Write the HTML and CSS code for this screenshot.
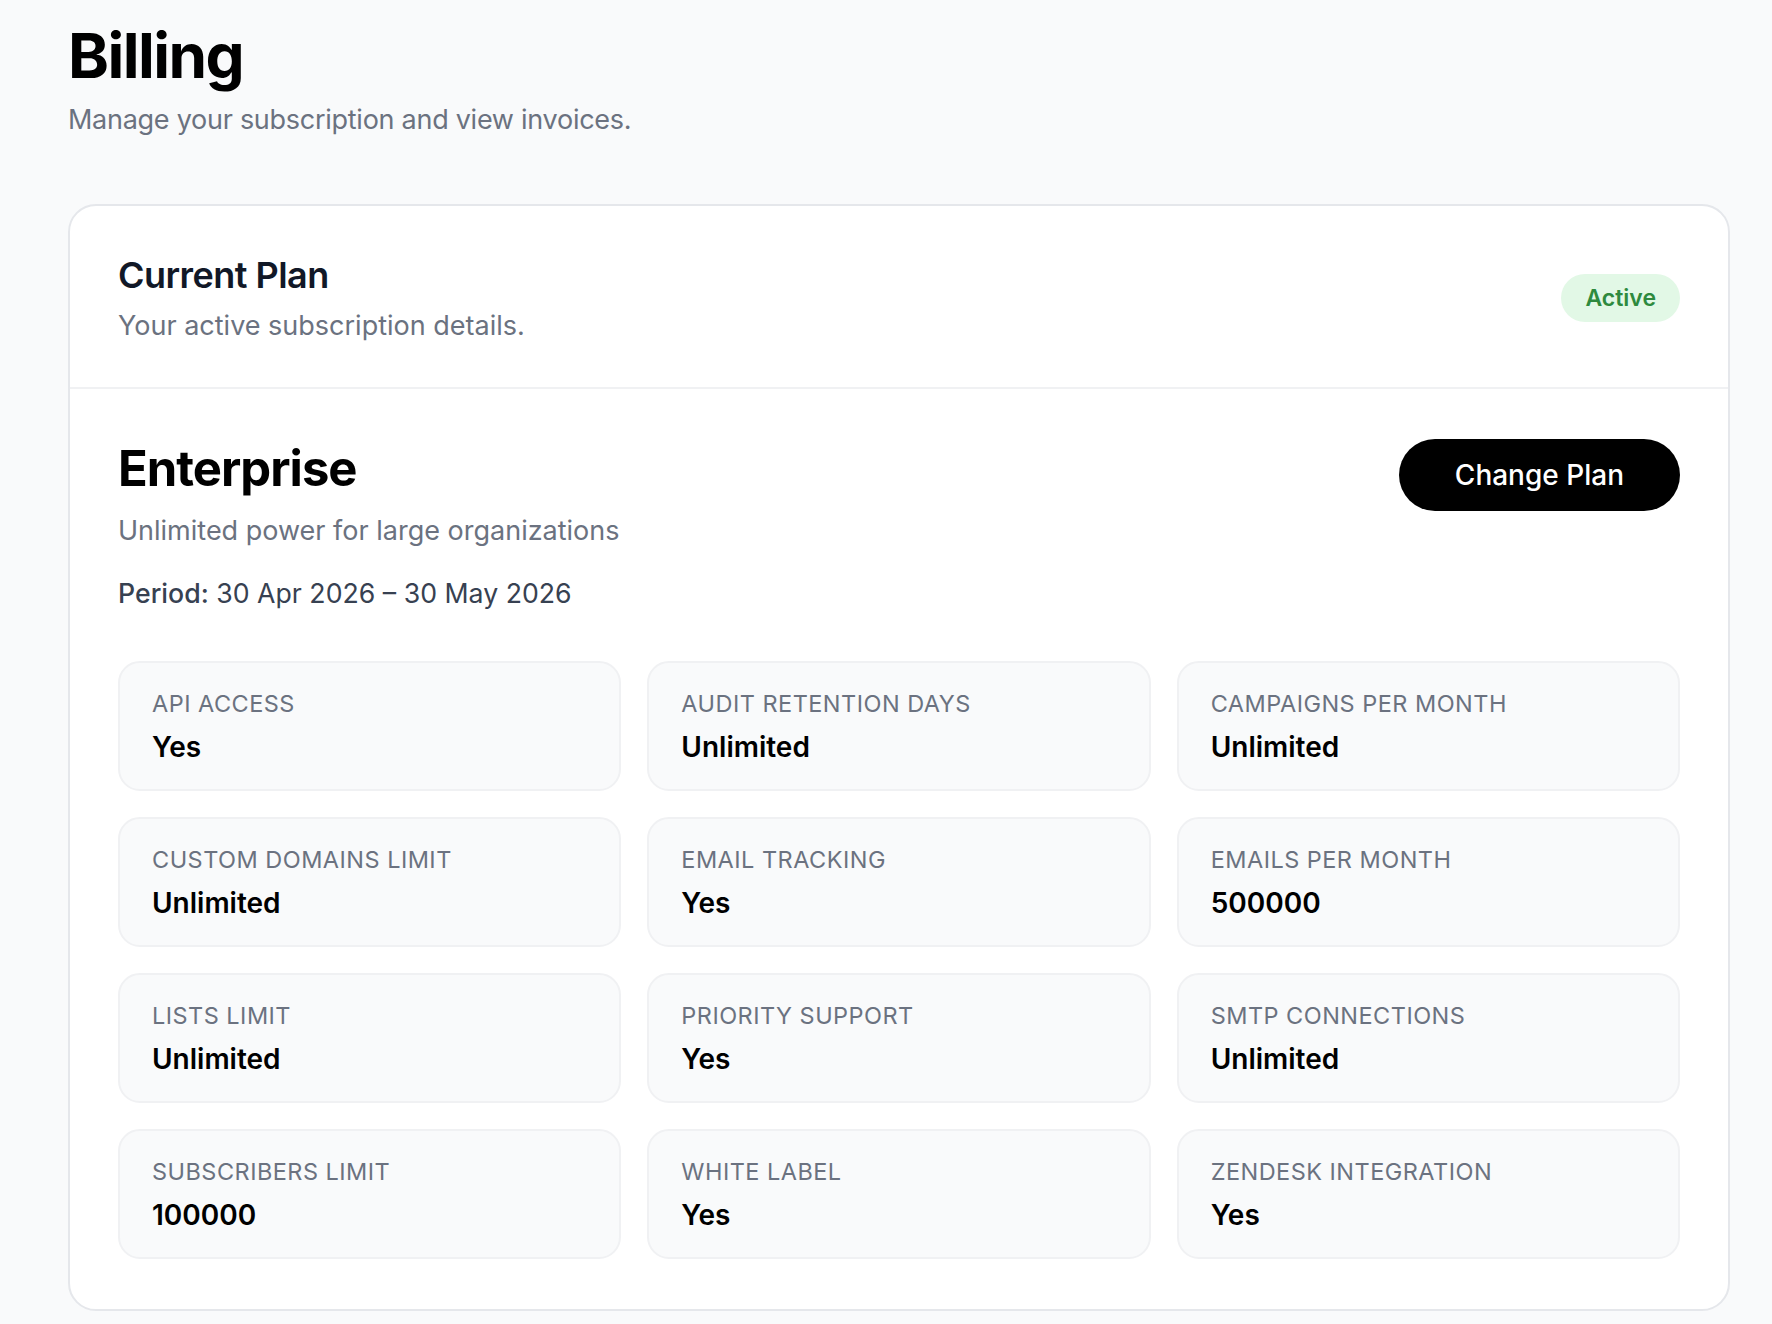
FILE: index.html
```html
<!DOCTYPE html>
<html lang="en">
<head>
    <meta charset="UTF-8">
    <meta name="viewport" content="width=device-width, initial-scale=1.0">
    <title>Billing</title>
    <link rel="stylesheet" href="styles.css">
</head>
<body>
    <div class="page">
        <header class="page-head">
            <h1>Billing</h1>
            <p class="page-sub">Manage your subscription and view invoices.</p>
        </header>

        <section class="card">
            <div class="card-head">
                <div>
                    <h2>Current Plan</h2>
                    <p class="card-sub">Your active subscription details.</p>
                </div>
                <span class="badge">Active</span>
            </div>

            <div class="card-body">
                <div class="plan-row">
                    <div>
                        <h3 class="plan-name">Enterprise</h3>
                        <p class="plan-desc">Unlimited power for large organizations</p>
                        <p class="plan-period"><strong>Period:</strong> 30 Apr 2026 – 30 May 2026</p>
                    </div>
                    <button class="btn-dark">Change Plan</button>
                </div>

                <div class="features">
                    <div class="feature"><div class="f-label">API Access</div><div class="f-value">Yes</div></div>
                    <div class="feature"><div class="f-label">Audit Retention Days</div><div class="f-value">Unlimited</div></div>
                    <div class="feature"><div class="f-label">Campaigns Per Month</div><div class="f-value">Unlimited</div></div>
                    <div class="feature"><div class="f-label">Custom Domains Limit</div><div class="f-value">Unlimited</div></div>
                    <div class="feature"><div class="f-label">Email Tracking</div><div class="f-value">Yes</div></div>
                    <div class="feature"><div class="f-label">Emails Per Month</div><div class="f-value">500000</div></div>
                    <div class="feature"><div class="f-label">Lists Limit</div><div class="f-value">Unlimited</div></div>
                    <div class="feature"><div class="f-label">Priority Support</div><div class="f-value">Yes</div></div>
                    <div class="feature"><div class="f-label">SMTP Connections</div><div class="f-value">Unlimited</div></div>
                    <div class="feature"><div class="f-label">Subscribers Limit</div><div class="f-value">100000</div></div>
                    <div class="feature"><div class="f-label">White Label</div><div class="f-value">Yes</div></div>
                    <div class="feature"><div class="f-label">Zendesk Integration</div><div class="f-value">Yes</div></div>
                </div>
            </div>
        </section>
    </div>
</body>
</html>
```

FILE: styles.css
```css
* {
    box-sizing: border-box;
}
body {
    font-family: Inter, 'Noto Sans', sans-serif;
    margin: 0;
    background-color: #f9fafb;
    color: #000;
}
.page {
    padding: 19px 42px 40px 68px;
}
h1 {
    font-size: 62px;
    font-weight: 700;
    letter-spacing: -0.025em;
    line-height: 1.2;
    margin: 0;
}
.page-sub {
    font-size: 27px;
    color: #6b7280;
    margin: 10px 0 0;
    letter-spacing: -0.01em;
}
.card {
    margin-top: 68px;
    background: white;
    border: 2px solid #e5e7eb;
    border-radius: 28px;
}
.card-head {
    display: flex;
    justify-content: space-between;
    align-items: center;
    padding: 47px 48px 45px;
    border-bottom: 2px solid #f0f1f3;
}
h2 {
    font-size: 36px;
    font-weight: 600;
    color: #111827;
    margin: 0;
    letter-spacing: -0.015em;
}
.card-sub {
    font-size: 27px;
    color: #6b7280;
    margin: 12px 0 0;
}
.badge {
    background: #e2f8e6;
    color: #2e8a3e;
    font-size: 23px;
    font-weight: 600;
    padding: 10px 24px;
    border-radius: 999px;
}
.card-body {
    padding: 50px 48px 50px 48px;
}
.plan-row {
    display: flex;
    justify-content: space-between;
    align-items: flex-start;
}
.plan-name {
    font-size: 49px;
    font-weight: 700;
    margin: 0;
    letter-spacing: -0.02em;
}
.plan-desc {
    font-size: 27px;
    color: #6b7280;
    margin: 16px 0 0;
}
.plan-period {
    font-size: 26.7px;
    color: #374151;
    margin: 30px 0 0;
}
.plan-period strong {
    font-weight: 500;
}
.btn-dark {
    background: #000;
    color: white;
    border: none;
    font-family: inherit;
    font-size: 28px;
    font-weight: 500;
    padding: 0 56px;
    height: 72px;
    border-radius: 999px;
    cursor: pointer;
}
.features {
    display: grid;
    grid-template-columns: repeat(3, 1fr);
    gap: 26px;
    margin-top: 52px;
}
.feature {
    background: #f9fafb;
    border: 2px solid #f0f1f3;
    border-radius: 22px;
    height: 130px;
    padding: 26px 32px;
}
.f-label {
    font-size: 23.5px;
    color: #6b7280;
    text-transform: uppercase;
    letter-spacing: 0.02em;
}
.f-value {
    font-size: 28px;
    font-weight: 600;
    margin-top: 12px;
}
```
